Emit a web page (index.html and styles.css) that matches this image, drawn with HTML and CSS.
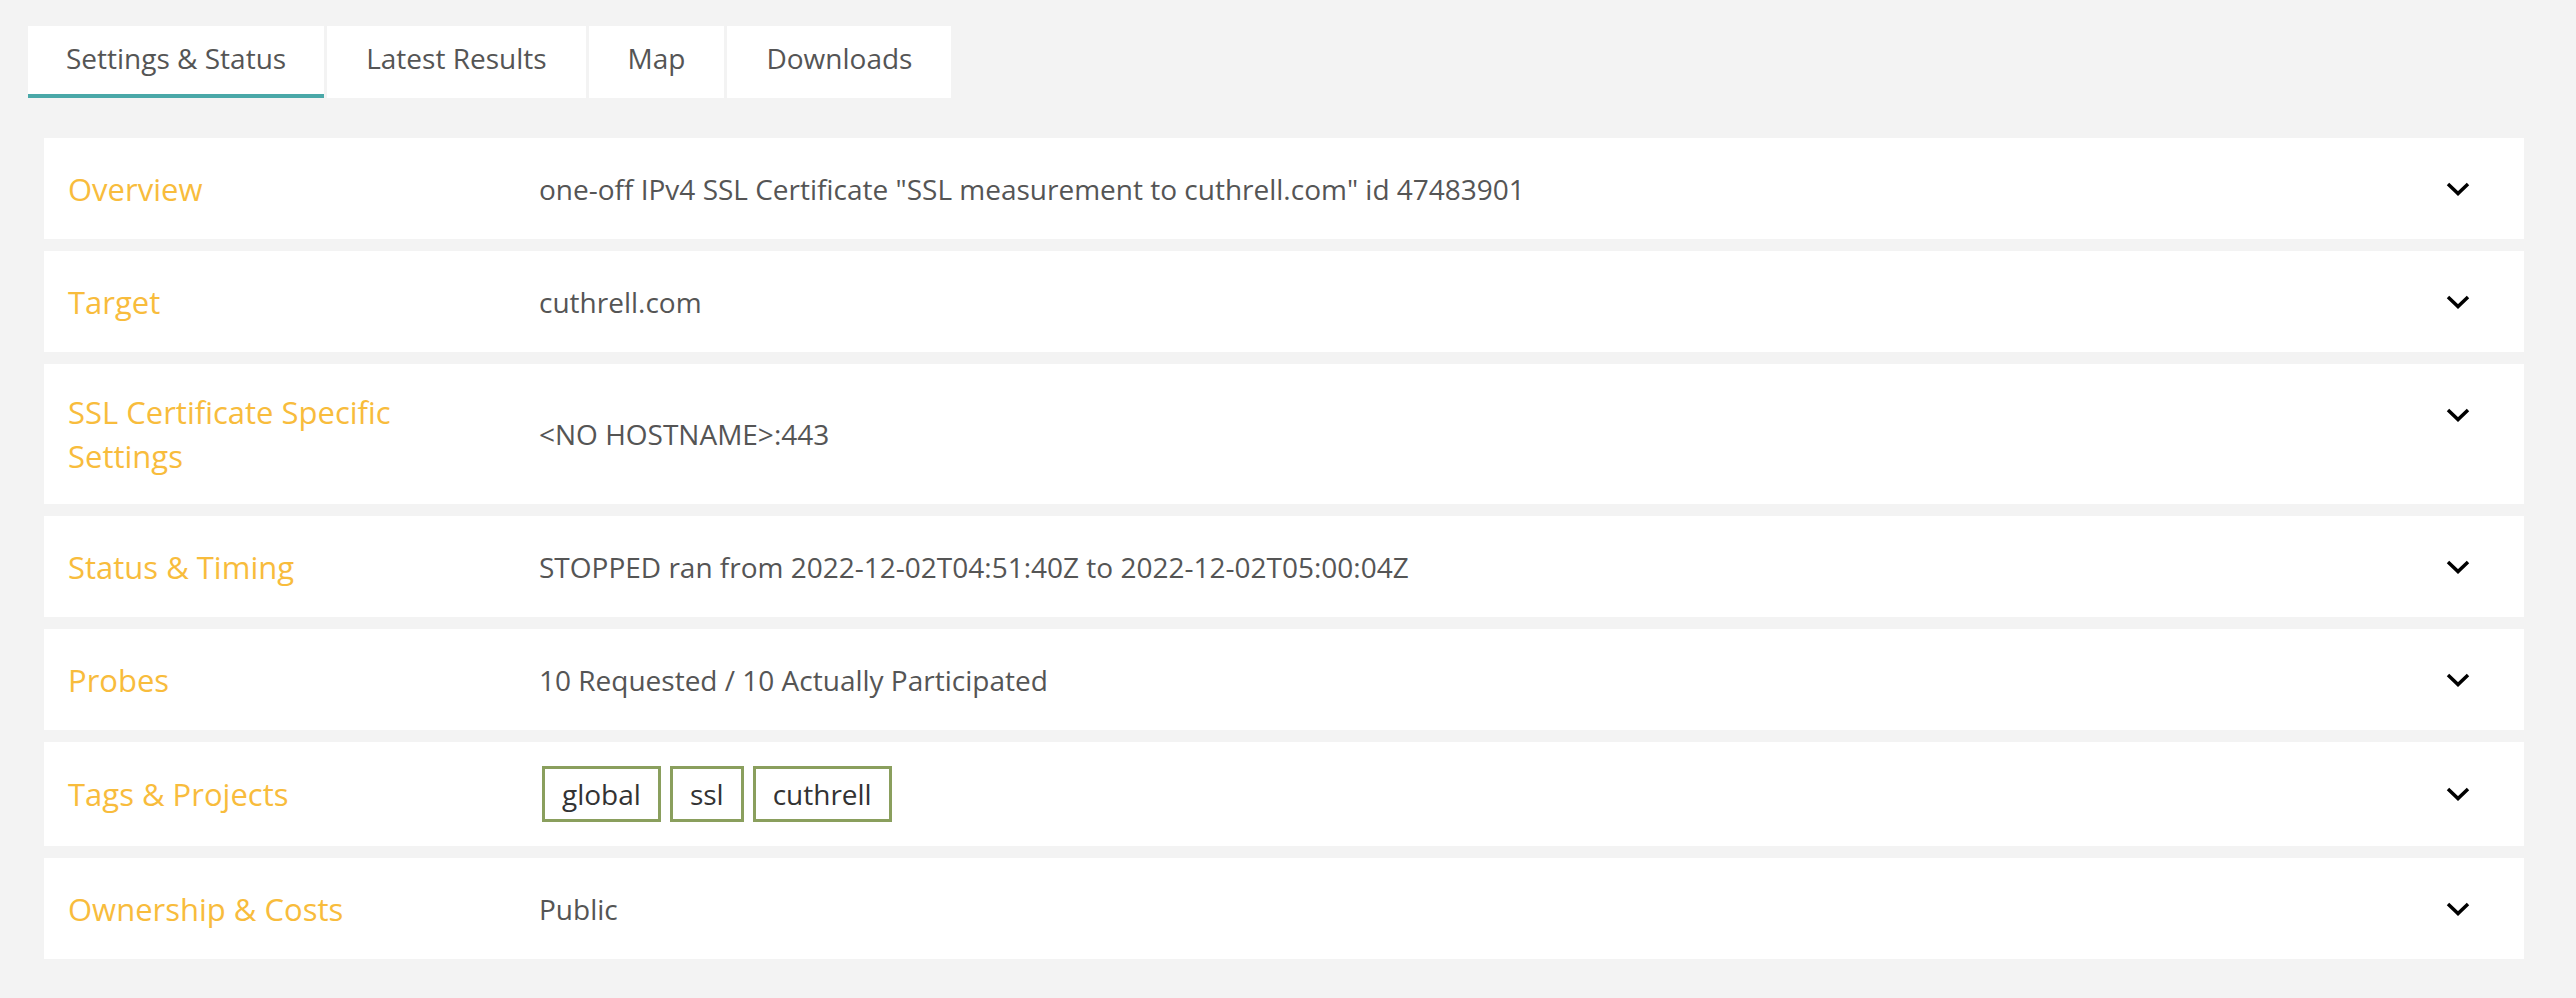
FILE: index.html
```html
<!DOCTYPE html>
<html lang="en">
<head>
<meta charset="utf-8">
<title>Measurement</title>
<link rel="stylesheet" href="styles.css">
</head>
<body>
<div class="page">
  <nav class="tabs">
    <div class="tab active">Settings &amp; Status</div>
    <div class="tab">Latest Results</div>
    <div class="tab">Map</div>
    <div class="tab">Downloads</div>
  </nav>
  <div class="panels">
    <div class="panel">
      <div class="label">Overview</div>
      <div class="value">one-off IPv4 SSL Certificate "SSL measurement to cuthrell.com" id 47483901</div>
      <div class="toggle"><svg class="chev" viewBox="0 0 24 14"><path d="M2 2 L12 11.5 L22 2" /></svg></div>
    </div>
    <div class="panel">
      <div class="label">Target</div>
      <div class="value">cuthrell.com</div>
      <div class="toggle"><svg class="chev" viewBox="0 0 24 14"><path d="M2 2 L12 11.5 L22 2" /></svg></div>
    </div>
    <div class="panel">
      <div class="label">SSL Certificate Specific Settings</div>
      <div class="value">&lt;NO HOSTNAME&gt;:443</div>
      <div class="toggle"><svg class="chev" viewBox="0 0 24 14"><path d="M2 2 L12 11.5 L22 2" /></svg></div>
    </div>
    <div class="panel">
      <div class="label">Status &amp; Timing</div>
      <div class="value">STOPPED ran from 2022-12-02T04:51:40Z to 2022-12-02T05:00:04Z</div>
      <div class="toggle"><svg class="chev" viewBox="0 0 24 14"><path d="M2 2 L12 11.5 L22 2" /></svg></div>
    </div>
    <div class="panel">
      <div class="label">Probes</div>
      <div class="value">10 Requested / 10 Actually Participated</div>
      <div class="toggle"><svg class="chev" viewBox="0 0 24 14"><path d="M2 2 L12 11.5 L22 2" /></svg></div>
    </div>
    <div class="panel">
      <div class="label">Tags &amp; Projects</div>
      <div class="value tags">
        <span class="tag">global</span>
        <span class="tag">ssl</span>
        <span class="tag">cuthrell</span>
      </div>
      <div class="toggle"><svg class="chev" viewBox="0 0 24 14"><path d="M2 2 L12 11.5 L22 2" /></svg></div>
    </div>
    <div class="panel">
      <div class="label">Ownership &amp; Costs</div>
      <div class="value">Public</div>
      <div class="toggle"><svg class="chev" viewBox="0 0 24 14"><path d="M2 2 L12 11.5 L22 2" /></svg></div>
    </div>
  </div>
</div>
</body>
</html>
```
FILE: styles.css
```css
html, body {
  margin: 0;
  padding: 0;
  background: #f3f3f3;
}
body {
  font-family: "Open Sans", "Noto Sans", sans-serif;
}
.page {
  padding: 26px 52px 37px 28px;
}
.tabs {
  display: flex;
  gap: 3px;
}
.tab {
  background: #fff;
  color: #555;
  font-size: 28px;
  line-height: 64px;
  height: 64px;
  padding: 0 39px 4px;
  border-bottom: 4px solid transparent;
}
.tab.active {
  border-bottom-color: #4aa8a8;
  padding: 0 38px 4px;
}
.panels {
  margin: 40px 0 0 16px;
  display: flex;
  flex-direction: column;
  gap: 12px;
}
.panel {
  background: #fff;
  display: flex;
  align-items: center;
  padding: 26px 54px 26px 24px;
  min-height: 49px;
}
.label {
  flex: 0 0 411px;
  padding-right: 60px;
  color: #f8bc3c;
  font-size: 31px;
  line-height: 44px;
}
.value {
  flex: 1;
  color: #555;
  font-size: 28px;
  line-height: 44px;
}
.tags {
  display: flex;
  gap: 9px;
  margin: -2px 0 -2px 3px;
}
.tag {
  border: 3px solid #8a9f5d;
  color: #333;
  font-size: 28px;
  line-height: 50px;
  padding: 0 17px;
}
.toggle {
  align-self: flex-start;
  height: 49px;
  display: flex;
  align-items: center;
}
.panel:nth-child(6) .toggle {
  align-self: center;
}
.chev {
  width: 24px;
  height: 14px;
  flex: none;
}
.chev path {
  fill: none;
  stroke: #000;
  stroke-width: 3.5;
}
```
